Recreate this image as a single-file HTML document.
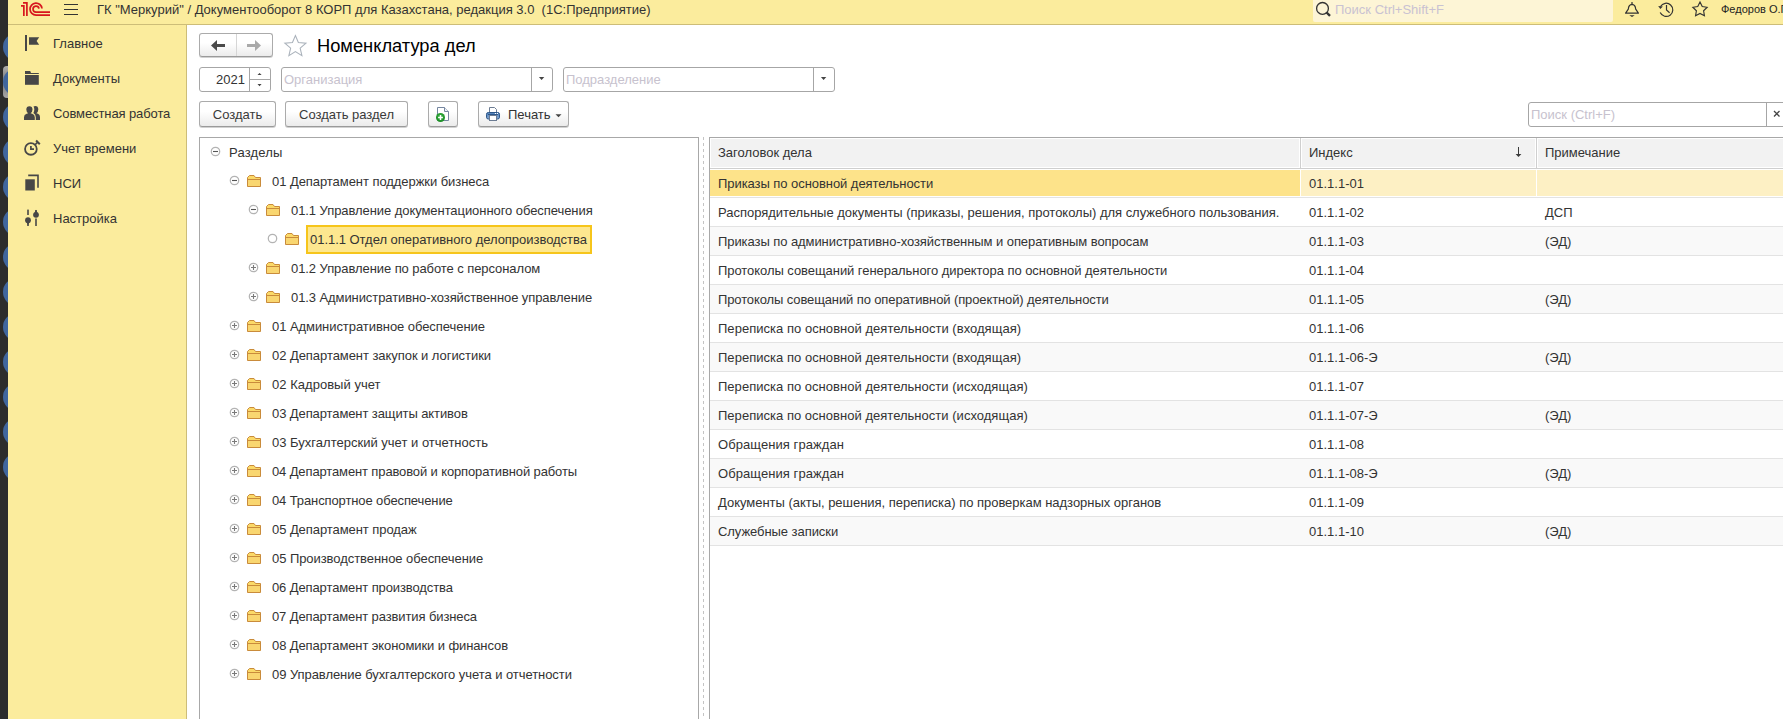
<!DOCTYPE html><html><head><meta charset="utf-8"><style>
*{box-sizing:border-box;margin:0;padding:0}
html,body{width:1783px;height:719px;overflow:hidden;background:#fff}
body{position:relative;font-family:"Liberation Sans",sans-serif;font-size:13px;color:#333}
.a{position:absolute}
.t{position:absolute;white-space:pre;line-height:29px;height:29px;top:0}
#strip{left:0;top:0;width:8px;height:719px;background:#2c2c2c;overflow:hidden}
#strip i{position:absolute;left:3px;width:28px;height:28px;border-radius:50%;background:#40669d}
#hdr{left:8px;top:0;width:1775px;height:25px;background:#fbec9d;border-bottom:1px solid #cdbd78}
#side{left:8px;top:25px;width:179px;height:694px;background:#fbec9d;border-right:1px solid #cdbd78}
.mi{position:absolute;left:45px;white-space:pre;color:#333;line-height:16px}
.btn{position:absolute;border:1px solid #ababab;border-bottom-color:#9a9a9a;border-radius:3px;background:linear-gradient(#fff 40%,#ebebeb);box-shadow:0 1px 0 rgba(0,0,0,.18);height:26px;padding-top:1px;line-height:23px;text-align:center;color:#3a3a3a}
.fld{position:absolute;border:1px solid #a6a6a6;border-radius:3px;background:#fff;height:25px}
.ph{color:#c7c2ce}
#tree{left:199px;top:137px;width:500px;height:600px;border:1px solid #a8a8a8;background:#fff}
#grid{left:709px;top:137px;width:1100px;height:600px;border:1px solid #a8a8a8;background:#fff}
.tr{position:absolute;left:0;width:498px;height:29px}
.gr{position:absolute;left:0;width:1100px;height:29px;border-bottom:1px solid #e3e3e3}
</style></head><body>
<div id="strip" class="a">
<b style="position:absolute;left:3px;top:66px;width:10px;height:32px;border-radius:4px;background:linear-gradient(#b0b0b0,#8c8c8c 30%,#8c8c8c 70%,#a8a8a8)"></b>
<i style="top:32.7px"></i>
<i style="top:67.7px"></i>
<i style="top:102.8px"></i>
<i style="top:137.8px"></i>
<i style="top:172.8px"></i>
<i style="top:207.9px"></i>
<i style="top:242.9px"></i>
<i style="top:277.9px"></i>
<i style="top:312.9px"></i>
<i style="top:348.0px"></i>
<i style="top:383.0px"></i>
<i style="top:418.0px"></i>
<i style="top:453.1px"></i>
</div>
<div id="hdr" class="a">
<svg class="a" style="left:-8px;top:0" width="60" height="24" viewBox="0 0 60 24"><g fill="none" stroke="#d7161e" stroke-width="1.7" stroke-linecap="butt"><path d="M21 5.85H23.85V16"/><path d="M23 2.85H26.9V16"/><path d="M41.99 8.5A6 6 0 1 0 36 15.1H50"/><path d="M38.97 8.6A3 3 0 1 0 36 12.1H50"/></g></svg>
<div class="a" style="left:56px;top:4px;width:14px;height:1px;background:#333"></div>
<div class="a" style="left:56px;top:9px;width:14px;height:1px;background:#333"></div>
<div class="a" style="left:56px;top:14px;width:14px;height:1px;background:#333"></div>
<div class="a" style="left:89px;top:2px;line-height:16px;white-space:pre;color:#333">ГК "Меркурий" / Документооборот 8 КОРП для Казахстана, редакция 3.0  (1С:Предприятие)</div>
<div class="a" style="left:1305px;top:0;width:300px;height:22px;background:#fdf5d6;border-radius:0 0 2px 2px"></div>
<svg class="a" style="left:1292px;top:0" width="40" height="24"><circle cx="22.5" cy="8.4" r="5.9" fill="none" stroke="#333" stroke-width="1.3"/><path d="M26.6 12.5L30 15.9" stroke="#333" stroke-width="2.4"/></svg>
<div class="a" style="left:1327px;top:2px;line-height:16px;white-space:pre;color:#c9c2d2">Поиск Ctrl+Shift+F</div>
<svg class="a" style="left:1604px;top:0" width="30" height="24"><path d="M13.6 13.2L16.3 9.2Q16.6 4.6 20 4.4Q23.4 4.6 23.7 9.2L26.4 13.2Z" fill="none" stroke="#333" stroke-width="1.2" stroke-linejoin="round"/><rect x="19.4" y="2" width="1.2" height="2" fill="#333"/><path d="M17.3 15.2H22.7L20 16.9Z" fill="#333"/></svg>
<svg class="a" style="left:1642px;top:0" width="30" height="24"><path d="M10.5 6.5A6.6 6.6 0 1 1 10.2 12.6" fill="none" stroke="#333" stroke-width="1.2"/><path d="M8.2 6.1L12.9 6.5L10.3 8.9Z" fill="#333"/><path d="M16.5 5.1V9.9L19.6 12.7" fill="none" stroke="#333" stroke-width="1.2"/></svg>
<svg class="a" style="left:1672px;top:0" width="30" height="24"><path d="M20.00 2.10L22.23 6.53L27.13 7.28L23.61 10.77L24.41 15.67L20.00 13.40L15.59 15.67L16.39 10.77L12.87 7.28L17.77 6.53Z" fill="none" stroke="#333" stroke-width="1.15" stroke-linejoin="miter"/></svg>
<div class="a" style="left:1713px;top:1px;line-height:16px;white-space:pre;color:#222;font-size:11px">Федоров О.Г.</div>
</div>
<div id="side" class="a">
<div class="mi" style="top:11px;letter-spacing:0px">Главное</div>
<div class="mi" style="top:46px;letter-spacing:0px">Документы</div>
<div class="mi" style="top:81px;letter-spacing:-0.1px">Совместная работа</div>
<div class="mi" style="top:116px;letter-spacing:0px">Учет времени</div>
<div class="mi" style="top:151px;letter-spacing:0px">НСИ</div>
<div class="mi" style="top:186px;letter-spacing:0px">Настройка</div>
<svg class="a" style="left:-8px;top:-25px" width="50" height="240" fill="#474747"><rect x="25" y="35" width="2" height="16"/><path d="M29 37.3H39.2L36.6 41.05L39.2 44.8H29Z"/><path d="M25 71H30.2L31 73H38.8V74H25Z"/><rect x="25" y="75" width="13.8" height="9.8"/><path d="M24 120V117.2Q24 114.6 26.6 113.8L28.2 113.3Q26.3 112 26.3 109.6Q26.3 106.2 29.4 106.2Q32.5 106.2 32.5 109.6Q32.5 112 30.6 113.3L32.2 113.8Q34.8 114.6 34.8 117.2V120Z"/><path d="M33.5 106.6Q34.3 106.1 35.2 106.1Q38.3 106.1 38.3 109.5Q38.3 111.9 36.4 113.2L38 113.7Q40 114.4 40 117V120H35.8V117.2Q35.8 114.4 33.4 113Q34.3 111.6 34.3 109.6Q34.3 107.6 33.5 106.6Z"/><circle cx="30.9" cy="148.9" r="5.85" fill="none" stroke="#474747" stroke-width="1.8"/><path d="M30.9 146V149.2H34" fill="none" stroke="#474747" stroke-width="1.7"/><path d="M35.2 144.6L37.6 142.2" fill="none" stroke="#474747" stroke-width="1.6"/><path d="M36.1 140.5L39.8 144.2" fill="none" stroke="#474747" stroke-width="2"/><path d="M28.2 174.6H38.8V187.8H37.2V176.2H28.2Z"/><rect x="25.3" y="179.3" width="9.5" height="11.2"/><rect x="27.2" y="209.6" width="1.6" height="5.4"/><circle cx="28" cy="220.2" r="2.9"/><path d="M26.2 221.5L28 225.3L29.8 221.5Z"/><rect x="27.2" y="222" width="1.6" height="4"/><rect x="35.2" y="210" width="1.6" height="4"/><circle cx="36" cy="214.8" r="2.9"/><path d="M34.2 213.5L36 209.8L37.8 213.5Z"/><rect x="35.2" y="218.5" width="1.6" height="7.5"/></svg>
</div>
<div class="btn" style="left:199px;top:33px;width:74px;height:24px;border-radius:3px"></div>
<div class="a" style="left:236px;top:34px;width:1px;height:22px;background:#d6d6d6"></div>
<svg class="a" style="left:199px;top:33px" width="74" height="24"><path d="M12 12.5L18 7.1V10.9H26V14.1H18V17.9Z" fill="#4a4a4a"/><path d="M62 12.5L56 7.1V10.9H48V14.1H56V17.9Z" fill="#a9a9a9"/></svg>
<svg class="a" style="left:280px;top:30px" width="30" height="30"><path d="M15.40 5.50L18.34 12.55L25.96 13.17L20.16 18.15L21.92 25.58L15.40 21.60L8.88 25.58L10.64 18.15L4.84 13.17L12.46 12.55Z" fill="none" stroke="#aab2bb" stroke-width="1.05" stroke-linejoin="miter"/></svg>
<div class="a" style="left:317px;top:35px;line-height:22px;white-space:pre;color:#000;font-size:18.3px">Номенклатура дел</div>
<div class="fld" style="left:199px;top:67px;width:72px;height:25px"></div>
<div class="a" style="left:249px;top:68px;width:1px;height:23px;background:#a6a6a6"></div>
<div class="a" style="left:250px;top:79px;width:20px;height:1px;background:#a6a6a6"></div>
<svg class="a" style="left:250px;top:68px" width="20" height="23"><path d="M7.5 7.1H11.6L9.55 4.9Z M7.5 16H11.6L9.55 18.2Z" fill="#444"/></svg>
<div class="a" style="left:199px;top:72px;width:46px;line-height:16px;text-align:right;color:#333">2021</div>
<div class="fld" style="left:281px;top:67px;width:272px;height:25px"></div>
<div class="a" style="left:531px;top:68px;width:1px;height:23px;background:#a6a6a6"></div>
<svg class="a" style="left:532px;top:68px" width="20" height="23"><path d="M6.9 9.1H12.3L9.6 11.9Z" fill="#444"/></svg>
<div class="a ph" style="left:284px;top:72px;line-height:16px;white-space:pre">Организация</div>
<div class="fld" style="left:563px;top:67px;width:272px;height:25px"></div>
<div class="a" style="left:813px;top:68px;width:1px;height:23px;background:#a6a6a6"></div>
<svg class="a" style="left:814px;top:68px" width="20" height="23"><path d="M6.9 9.1H12.3L9.6 11.9Z" fill="#444"/></svg>
<div class="a ph" style="left:566px;top:72px;line-height:16px;white-space:pre">Подразделение</div>
<div class="btn" style="left:199px;top:101px;width:77px">Создать</div>
<div class="btn" style="left:285px;top:101px;width:123px">Создать раздел</div>
<div class="btn" style="left:428px;top:101px;width:30px"></div>
<svg class="a" style="left:428px;top:101px" width="30" height="25"><path d="M9.5 6.5H16.5L20.5 10.5V19.5H9.5Z" fill="#fff" stroke="#7586a0" stroke-width="1"/><path d="M16.5 6.5V10.5H20.5" fill="#eef1f5" stroke="#7586a0" stroke-width="1"/><defs><radialGradient id="gg" cx="50%" cy="40%" r="60%"><stop offset="0" stop-color="#3cb446"/><stop offset="1" stop-color="#178a22"/></radialGradient></defs><circle cx="12.5" cy="16.5" r="4.5" fill="url(#gg)"/><path d="M12.5 14.1V18.9M10.1 16.5H14.9" stroke="#fff" stroke-width="1.5"/></svg>
<div class="btn" style="left:478px;top:101px;width:91px"></div>
<svg class="a" style="left:478px;top:101px" width="30" height="25"><path d="M11.5 6.5H16.5L18.5 8.5V11.5H11.5Z" fill="#fff" stroke="#6c7c93" stroke-width="1"/><defs><linearGradient id="pg" x1="0" y1="0" x2="0" y2="1"><stop offset="0" stop-color="#4f7fb8"/><stop offset="1" stop-color="#86a8d2"/></linearGradient></defs><rect x="8.5" y="11.5" width="13" height="6.5" rx="1.8" fill="url(#pg)" stroke="#2d578a" stroke-width="1"/><path d="M10 13.5H20" stroke="#2d578a" stroke-width="1"/><rect x="16.9" y="12" width="1.1" height="1" fill="#fff"/><rect x="18.9" y="12" width="1.1" height="1" fill="#fff"/><rect x="11.5" y="14.5" width="7" height="5" fill="#fff" stroke="#6c7c93" stroke-width="1"/></svg>
<div class="a" style="left:508px;top:107px;line-height:16px;white-space:pre;color:#333">Печать</div>
<svg class="a" style="left:550px;top:101px" width="15" height="25"><path d="M5.5 13.2H11.5L8.5 16.2Z" fill="#444"/></svg>
<div class="fld" style="left:1528px;top:102px;width:270px;height:25px"></div>
<div class="a" style="left:1766px;top:103px;width:1px;height:23px;background:#a6a6a6"></div>
<svg class="a" style="left:1767px;top:103px" width="16" height="23"><path d="M7 8L12.5 13.5M12.5 8L7 13.5" stroke="#444" stroke-width="1.3"/></svg>
<div class="a ph" style="left:1531px;top:107px;line-height:16px;white-space:pre">Поиск (Ctrl+F)</div>
<div id="tree" class="a">
<div class="t" style="left:29px;top:0px;letter-spacing:0.167px">Разделы</div>
<div class="t" style="left:72px;top:29px;letter-spacing:-0.058px">01 Департамент поддержки бизнеса</div>
<div class="t" style="left:91px;top:58px;letter-spacing:-0.066px">01.1 Управление документационного обеспечения</div>
<div class="a" style="left:105.5px;top:87px;width:286px;height:29px;background:#fde78f;border:2px solid #f6c51b"></div>
<div class="t" style="left:110px;top:87px;letter-spacing:-0.032px">01.1.1 Отдел оперативного делопроизводства</div>
<div class="t" style="left:91px;top:116px;letter-spacing:-0.073px">01.2 Управление по работе с персоналом</div>
<div class="t" style="left:91px;top:145px;letter-spacing:-0.086px">01.3 Административно-хозяйственное управление</div>
<div class="t" style="left:72px;top:174px;letter-spacing:-0.060px">01 Административное обеспечение</div>
<div class="t" style="left:72px;top:203px;letter-spacing:-0.055px">02 Департамент закупок и логистики</div>
<div class="t" style="left:72px;top:232px;letter-spacing:0.033px">02 Кадровый учет</div>
<div class="t" style="left:72px;top:261px;letter-spacing:-0.096px">03 Департамент защиты активов</div>
<div class="t" style="left:72px;top:290px;letter-spacing:0.009px">03 Бухгалтерский учет и отчетность</div>
<div class="t" style="left:72px;top:319px;letter-spacing:-0.127px">04 Департамент правовой и корпоративной работы</div>
<div class="t" style="left:72px;top:348px;letter-spacing:-0.108px">04 Транспортное обеспечение</div>
<div class="t" style="left:72px;top:377px;letter-spacing:-0.065px">05 Департамент продаж</div>
<div class="t" style="left:72px;top:406px;letter-spacing:-0.060px">05 Производственное обеспечение</div>
<div class="t" style="left:72px;top:435px;letter-spacing:-0.108px">06 Департамент производства</div>
<div class="t" style="left:72px;top:464px;letter-spacing:-0.110px">07 Департамент развития бизнеса</div>
<div class="t" style="left:72px;top:493px;letter-spacing:-0.097px">08 Департамент экономики и финансов</div>
<div class="t" style="left:72px;top:522px;letter-spacing:-0.059px">09 Управление бухгалтерского учета и отчетности</div>
<svg class="a" style="left:0;top:0" width="498" height="600"><defs><g id="fold"><path d="M.5 11.5V2.5L2.5 .5H7L8.5 2.5H13.5V11.5Z" fill="#fbd968" stroke="#c98b3b" stroke-width="1"/><path d="M1 4.5H13" stroke="#c98b3b" stroke-width="1"/><rect x="1" y="5" width="12" height="6" fill="#f9d670"/></g></defs><circle cx="15.5" cy="13.5" r="4.2" fill="#fff" stroke="#b3b3b3" stroke-width="1.25"/><path d="M13.0 13.5H18.0" stroke="#555" stroke-width="1.1"/><circle cx="34.5" cy="42.5" r="4.2" fill="#fff" stroke="#b3b3b3" stroke-width="1.25"/><path d="M32.0 42.5H37.0" stroke="#555" stroke-width="1.1"/><use href="#fold" x="47" y="37"/><circle cx="53.5" cy="71.5" r="4.2" fill="#fff" stroke="#b3b3b3" stroke-width="1.25"/><path d="M51.0 71.5H56.0" stroke="#555" stroke-width="1.1"/><use href="#fold" x="66" y="66"/><circle cx="72.5" cy="100.5" r="4.2" fill="#fff" stroke="#b3b3b3" stroke-width="1.25"/><use href="#fold" x="85" y="95"/><circle cx="53.5" cy="129.5" r="4.2" fill="#fff" stroke="#b3b3b3" stroke-width="1.25"/><path d="M51.0 129.5H56.0M53.5 127.0V132.0" stroke="#7a7a7a" stroke-width="1.1"/><use href="#fold" x="66" y="124"/><circle cx="53.5" cy="158.5" r="4.2" fill="#fff" stroke="#b3b3b3" stroke-width="1.25"/><path d="M51.0 158.5H56.0M53.5 156.0V161.0" stroke="#7a7a7a" stroke-width="1.1"/><use href="#fold" x="66" y="153"/><circle cx="34.5" cy="187.5" r="4.2" fill="#fff" stroke="#b3b3b3" stroke-width="1.25"/><path d="M32.0 187.5H37.0M34.5 185.0V190.0" stroke="#7a7a7a" stroke-width="1.1"/><use href="#fold" x="47" y="182"/><circle cx="34.5" cy="216.5" r="4.2" fill="#fff" stroke="#b3b3b3" stroke-width="1.25"/><path d="M32.0 216.5H37.0M34.5 214.0V219.0" stroke="#7a7a7a" stroke-width="1.1"/><use href="#fold" x="47" y="211"/><circle cx="34.5" cy="245.5" r="4.2" fill="#fff" stroke="#b3b3b3" stroke-width="1.25"/><path d="M32.0 245.5H37.0M34.5 243.0V248.0" stroke="#7a7a7a" stroke-width="1.1"/><use href="#fold" x="47" y="240"/><circle cx="34.5" cy="274.5" r="4.2" fill="#fff" stroke="#b3b3b3" stroke-width="1.25"/><path d="M32.0 274.5H37.0M34.5 272.0V277.0" stroke="#7a7a7a" stroke-width="1.1"/><use href="#fold" x="47" y="269"/><circle cx="34.5" cy="303.5" r="4.2" fill="#fff" stroke="#b3b3b3" stroke-width="1.25"/><path d="M32.0 303.5H37.0M34.5 301.0V306.0" stroke="#7a7a7a" stroke-width="1.1"/><use href="#fold" x="47" y="298"/><circle cx="34.5" cy="332.5" r="4.2" fill="#fff" stroke="#b3b3b3" stroke-width="1.25"/><path d="M32.0 332.5H37.0M34.5 330.0V335.0" stroke="#7a7a7a" stroke-width="1.1"/><use href="#fold" x="47" y="327"/><circle cx="34.5" cy="361.5" r="4.2" fill="#fff" stroke="#b3b3b3" stroke-width="1.25"/><path d="M32.0 361.5H37.0M34.5 359.0V364.0" stroke="#7a7a7a" stroke-width="1.1"/><use href="#fold" x="47" y="356"/><circle cx="34.5" cy="390.5" r="4.2" fill="#fff" stroke="#b3b3b3" stroke-width="1.25"/><path d="M32.0 390.5H37.0M34.5 388.0V393.0" stroke="#7a7a7a" stroke-width="1.1"/><use href="#fold" x="47" y="385"/><circle cx="34.5" cy="419.5" r="4.2" fill="#fff" stroke="#b3b3b3" stroke-width="1.25"/><path d="M32.0 419.5H37.0M34.5 417.0V422.0" stroke="#7a7a7a" stroke-width="1.1"/><use href="#fold" x="47" y="414"/><circle cx="34.5" cy="448.5" r="4.2" fill="#fff" stroke="#b3b3b3" stroke-width="1.25"/><path d="M32.0 448.5H37.0M34.5 446.0V451.0" stroke="#7a7a7a" stroke-width="1.1"/><use href="#fold" x="47" y="443"/><circle cx="34.5" cy="477.5" r="4.2" fill="#fff" stroke="#b3b3b3" stroke-width="1.25"/><path d="M32.0 477.5H37.0M34.5 475.0V480.0" stroke="#7a7a7a" stroke-width="1.1"/><use href="#fold" x="47" y="472"/><circle cx="34.5" cy="506.5" r="4.2" fill="#fff" stroke="#b3b3b3" stroke-width="1.25"/><path d="M32.0 506.5H37.0M34.5 504.0V509.0" stroke="#7a7a7a" stroke-width="1.1"/><use href="#fold" x="47" y="501"/><circle cx="34.5" cy="535.5" r="4.2" fill="#fff" stroke="#b3b3b3" stroke-width="1.25"/><path d="M32.0 535.5H37.0M34.5 533.0V538.0" stroke="#7a7a7a" stroke-width="1.1"/><use href="#fold" x="47" y="530"/></svg>
</div>
<div class="a" style="left:703px;top:137px;width:1px;height:582px;background:repeating-linear-gradient(#c4c4c4 0 3px,transparent 3px 6px)"></div>
<div id="grid" class="a">
<div class="a" style="left:0;top:0;width:1100px;height:31px;background:#fff;border-bottom:1px solid #cfcfcf"></div>
<div class="a" style="left:1px;top:1px;width:588px;height:28px;background:#f2f2f2"></div>
<div class="a" style="left:592px;top:1px;width:233px;height:28px;background:#f2f2f2"></div>
<div class="a" style="left:828px;top:1px;width:261px;height:28px;background:#f2f2f2"></div>
<div class="a" style="left:590px;top:0;width:1px;height:30px;background:#cfcfcf"></div>
<div class="a" style="left:826px;top:0;width:1px;height:30px;background:#cfcfcf"></div>
<div class="t" style="left:8px;top:0">Заголовок дела</div>
<div class="t" style="left:599px;top:0">Индекс</div>
<div class="t" style="left:835px;top:0">Примечание</div>
<svg class="a" style="left:802px;top:8px" width="12" height="14"><rect x="6" y="1" width="1" height="8" fill="#3a3a3a"/><path d="M3.6 8H9.4L6.5 11.1Z" fill="#3a3a3a"/></svg>
<div class="gr" style="top:31px;background:#fff"></div>
<div class="a" style="left:0;top:32px;width:590px;height:26px;background:#fde38a"></div>
<div class="a" style="left:591px;top:32px;width:235px;height:26px;background:#fdf0c4"></div>
<div class="a" style="left:827px;top:32px;width:600px;height:26px;background:#fdf0c4"></div>
<div class="t" style="left:8px;top:31px;letter-spacing:-0.058px">Приказы по основной деятельности</div>
<div class="t" style="left:599px;top:31px">01.1.1-01</div>
<div class="gr" style="top:60px;background:#fff"></div>
<div class="t" style="left:8px;top:60px;letter-spacing:-0.019px">Распорядительные документы (приказы, решения, протоколы) для служебного пользования.</div>
<div class="t" style="left:599px;top:60px">01.1.1-02</div>
<div class="t" style="left:835px;top:60px">ДСП</div>
<div class="gr" style="top:89px;background:#f9f9f9"></div>
<div class="t" style="left:8px;top:89px;letter-spacing:-0.074px">Приказы по административно-хозяйственным и оперативным вопросам</div>
<div class="t" style="left:599px;top:89px">01.1.1-03</div>
<div class="t" style="left:835px;top:89px">(ЭД)</div>
<div class="gr" style="top:118px;background:#fff"></div>
<div class="t" style="left:8px;top:118px;letter-spacing:-0.056px">Протоколы совещаний генерального директора по основной деятельности</div>
<div class="t" style="left:599px;top:118px">01.1.1-04</div>
<div class="gr" style="top:147px;background:#f9f9f9"></div>
<div class="t" style="left:8px;top:147px;letter-spacing:-0.114px">Протоколы совещаний по оперативной (проектной) деятельности</div>
<div class="t" style="left:599px;top:147px">01.1.1-05</div>
<div class="t" style="left:835px;top:147px">(ЭД)</div>
<div class="gr" style="top:176px;background:#fff"></div>
<div class="t" style="left:8px;top:176px;letter-spacing:0.027px">Переписка по основной деятельности (входящая)</div>
<div class="t" style="left:599px;top:176px">01.1.1-06</div>
<div class="gr" style="top:205px;background:#f9f9f9"></div>
<div class="t" style="left:8px;top:205px;letter-spacing:0.027px">Переписка по основной деятельности (входящая)</div>
<div class="t" style="left:599px;top:205px">01.1.1-06-Э</div>
<div class="t" style="left:835px;top:205px">(ЭД)</div>
<div class="gr" style="top:234px;background:#fff"></div>
<div class="t" style="left:8px;top:234px;letter-spacing:0.024px">Переписка по основной деятельности (исходящая)</div>
<div class="t" style="left:599px;top:234px">01.1.1-07</div>
<div class="gr" style="top:263px;background:#f9f9f9"></div>
<div class="t" style="left:8px;top:263px;letter-spacing:0.024px">Переписка по основной деятельности (исходящая)</div>
<div class="t" style="left:599px;top:263px">01.1.1-07-Э</div>
<div class="t" style="left:835px;top:263px">(ЭД)</div>
<div class="gr" style="top:292px;background:#fff"></div>
<div class="t" style="left:8px;top:292px;letter-spacing:0.069px">Обращения граждан</div>
<div class="t" style="left:599px;top:292px">01.1.1-08</div>
<div class="gr" style="top:321px;background:#f9f9f9"></div>
<div class="t" style="left:8px;top:321px;letter-spacing:0.069px">Обращения граждан</div>
<div class="t" style="left:599px;top:321px">01.1.1-08-Э</div>
<div class="t" style="left:835px;top:321px">(ЭД)</div>
<div class="gr" style="top:350px;background:#fff"></div>
<div class="t" style="left:8px;top:350px;letter-spacing:-0.024px">Документы (акты, решения, переписка) по проверкам надзорных органов</div>
<div class="t" style="left:599px;top:350px">01.1.1-09</div>
<div class="gr" style="top:379px;background:#f9f9f9"></div>
<div class="t" style="left:8px;top:379px;letter-spacing:-0.062px">Служебные записки</div>
<div class="t" style="left:599px;top:379px">01.1.1-10</div>
<div class="t" style="left:835px;top:379px">(ЭД)</div>
</div>
</body></html>
